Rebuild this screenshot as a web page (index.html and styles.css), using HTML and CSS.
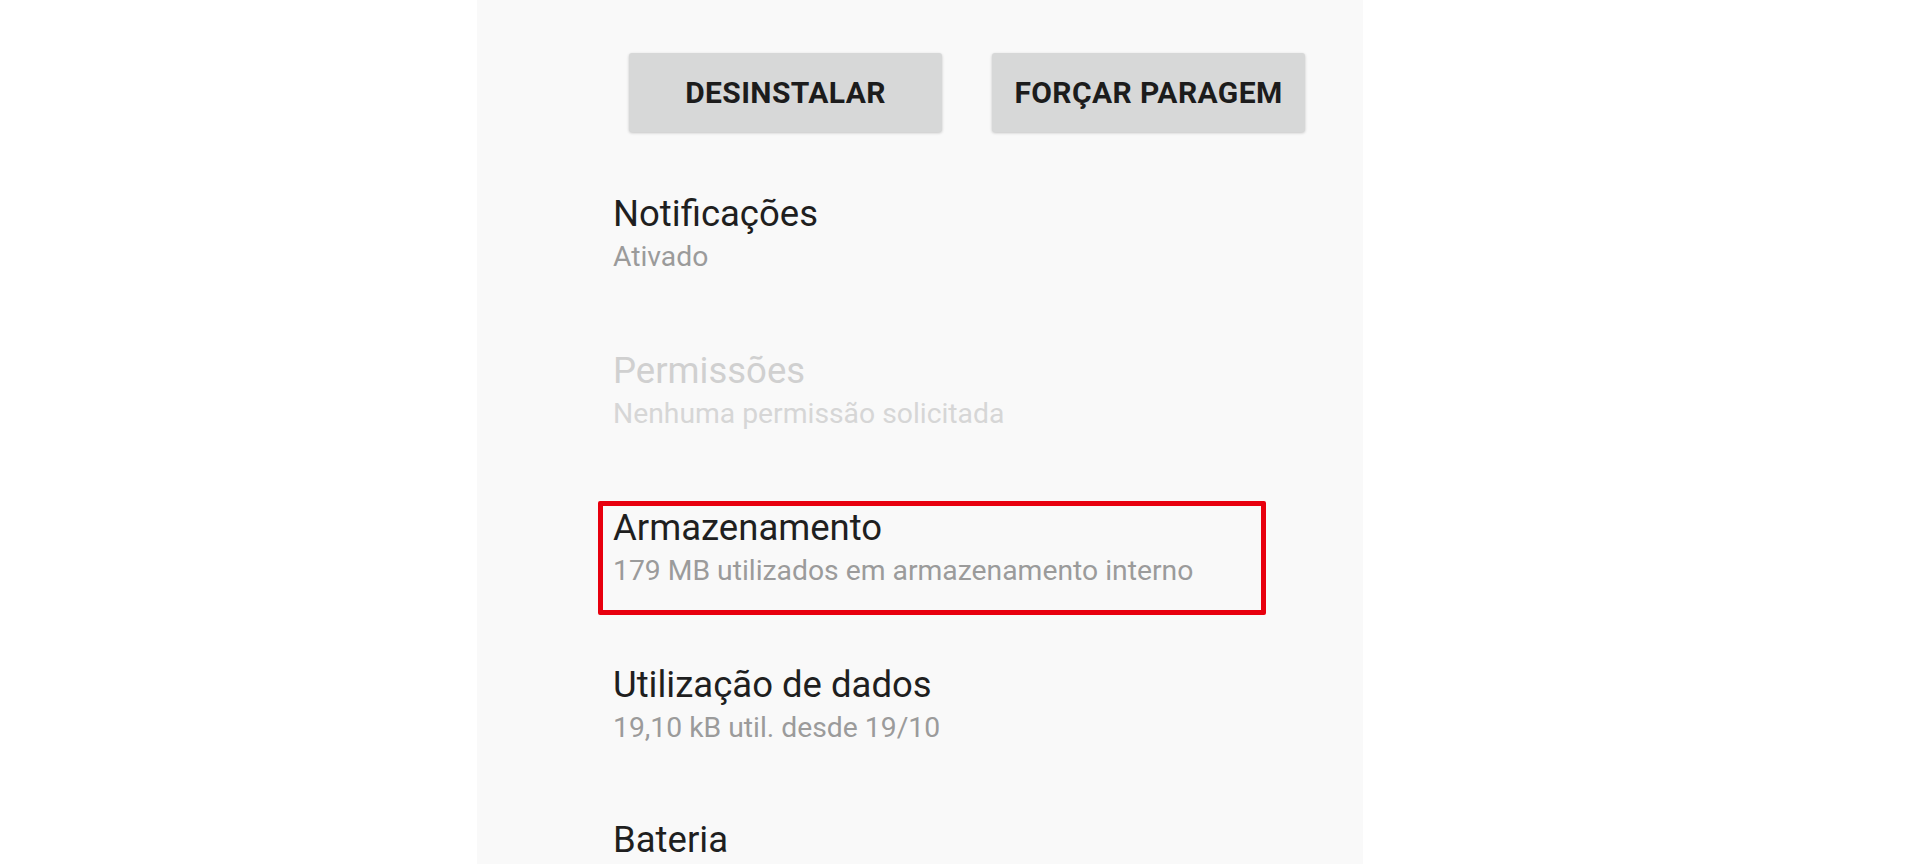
FILE: index.html
```html
<!DOCTYPE html>
<html lang="pt">
<head>
<meta charset="utf-8">
<title>Informações da aplicação</title>
<link rel="stylesheet" href="styles.css">
</head>
<body>
<div class="page">
  <main class="panel">
    <div class="actions">
      <button class="btn">DESINSTALAR</button>
      <button class="btn">FORÇAR PARAGEM</button>
    </div>
    <ul class="prefs">
      <li class="pref">
        <div class="pref-title">Notificações</div>
        <div class="pref-sub">Ativado</div>
      </li>
      <li class="pref disabled">
        <div class="pref-title">Permissões</div>
        <div class="pref-sub">Nenhuma permissão solicitada</div>
      </li>
      <li class="pref highlighted">
        <div class="pref-title">Armazenamento</div>
        <div class="pref-sub">179 MB utilizados em armazenamento interno</div>
      </li>
      <li class="pref">
        <div class="pref-title">Utilização de dados</div>
        <div class="pref-sub">19,10 kB util. desde 19/10</div>
      </li>
      <li class="pref last">
        <div class="pref-title">Bateria</div>
      </li>
    </ul>
  </main>
</div>
</body>
</html>
```

FILE: styles.css
```css
html, body {
  margin: 0;
  padding: 0;
  background: #ffffff;
  height: 100%;
  overflow: hidden;
}

.page {
  display: flex;
  padding-left: 477px;
  height: 864px;
}

.panel {
  width: 886px;
  height: 864px;
  background: #f9f9f9;
  font-family: Roboto, "Noto Sans", sans-serif;
  overflow: hidden;
}

.actions {
  display: flex;
  gap: 50px;
  padding: 53px 0 0 152px;
}

.btn {
  width: 313px;
  height: 79px;
  border: none;
  border-radius: 3px;
  background: #d7d8d8;
  box-shadow: 0 1px 3px rgba(0, 0, 0, 0.22);
  font-family: Roboto, "Noto Sans", sans-serif;
  font-weight: 700;
  font-size: 30px;
  letter-spacing: 0.4px;
  color: #1c1c1c;
  padding: 0;
}

.prefs {
  list-style: none;
  margin: 60px 0 0 0;
  padding: 0 0 0 136px;
  display: flex;
  flex-direction: column;
  gap: 74px;
}

.pref {
  position: relative;
}

.pref-title {
  font-size: 36.5px;
  line-height: 44px;
  color: #1f1f1f;
}

.pref-sub {
  margin-top: 3px;
  font-size: 28.3px;
  line-height: 36px;
  color: #9b9b9b;
}

.pref.last .pref-title {
  line-height: 40px;
}

.pref.disabled .pref-title {
  color: #d0d0d0;
}

.pref.disabled .pref-sub {
  color: #d6d6d6;
}

.pref.highlighted::after {
  content: "";
  position: absolute;
  left: -15px;
  top: -5px;
  width: 668px;
  height: 114px;
  box-sizing: border-box;
  border: 5px solid #e8000e;
  border-radius: 2px;
}
```
